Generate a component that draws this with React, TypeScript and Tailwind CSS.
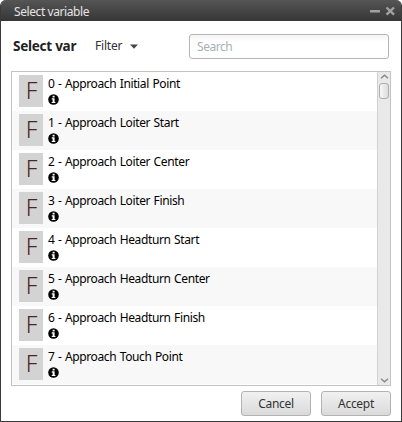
import type { ReactNode } from "react";

const variables = [
  "0 - Approach Initial Point",
  "1 - Approach Loiter Start",
  "2 - Approach Loiter Center",
  "3 - Approach Loiter Finish",
  "4 - Approach Headturn Start",
  "5 - Approach Headturn Center",
  "6 - Approach Headturn Finish",
  "7 - Approach Touch Point",
];

const InfoIcon = () => (
  <svg width="11" height="11" viewBox="0 0 11 11" className="block">
    <circle cx="5.5" cy="5.5" r="5.3" fill="#000" />
    <path d="M4.6 1.8h2v1.6h-2zM3.7 4.3h2.9v3.6h.8v1.2H3.7V7.9h.9V5.5h-.9z" fill="#fff" />
  </svg>
);

const TitleBar = () => (
  <div className="flex h-[21px] shrink-0 items-center justify-between rounded-t-[5px] bg-linear-to-b from-[#555555] to-[#363636] pl-[13px] pr-[6px]">
    <span className="pt-[3px] text-[12px] leading-[20px] tracking-[-0.42px] text-[#e4e4e4]">Select variable</span>
    <svg width="26" height="10" viewBox="0 0 26 10" className="mt-px block">
      <rect x="1" y="4" width="10" height="2.6" rx=".6" fill="#a2a2a2" />
      <path d="M17.5 1.5 25 8.7M25 1.5 17.5 8.7" stroke="#a2a2a2" strokeWidth="2.4" />
    </svg>
  </div>
);

const VariableRow = ({ label }: { label: string }) => (
  <div className="flex h-[39px] gap-[5px] pl-[7px] pt-[3px] even:bg-[#f8f8f8]">
    <div className="flex h-8 w-6 items-center justify-center bg-[#d3d3d3]">
      <span className="pl-px text-[23px] leading-[30px] font-light text-[#4b2424] pb-[2px]">F</span>
    </div>
    <div>
      <p className="h-[19px] text-[12px] leading-[18px] tracking-[-0.37px] [word-spacing:0.7px] whitespace-nowrap text-black">{label}</p>
      <InfoIcon />
    </div>
  </div>
);

const ScrollBar = () => (
  <div className="flex w-[13px] flex-col items-center border-l border-[#d2d2d2] bg-[#e9e9e9] pt-[2px] pb-[2px]">
    <svg width="9" height="5" viewBox="0 0 9 5" className="block">
      <path d="M1 4.2 4.5 1.2 8 4.2" fill="none" stroke="#858585" strokeWidth="1.3" />
    </svg>
    <div className="mt-[4px] h-4 w-[10px] rounded-[3px] border border-[#adadad] bg-linear-to-r from-[#f7f7f7] to-[#dcdcdc]" />
    <svg width="9" height="5" viewBox="0 0 9 5" className="mt-auto block">
      <path d="M1 .8 4.5 3.8 8 .8" fill="none" stroke="#858585" strokeWidth="1.3" />
    </svg>
  </div>
);

const Button = ({ children }: { children: ReactNode }) => (
  <button className="h-[25px] w-[70px] rounded-[3px] border border-[#b2b2b2] bg-linear-to-b from-[#f1f1f1] to-[#dadada] text-[12px] leading-[23px] tracking-[-0.3px] text-[#333333]">
    {children}
  </button>
);

const App = () => {
  return (
    <div className="h-[422px] w-[402px] bg-white font-['Noto_Sans','Open_Sans',sans-serif]">
      <div className="flex h-full flex-col rounded-t-[6px] border border-t-0 border-[#3b3b3b] bg-white">
        <TitleBar />
        <div className="flex h-[50px] shrink-0 items-center pl-3 pr-3">
          <span className="w-[82px] text-[13.5px] font-bold tracking-[-0.25px] whitespace-nowrap text-[#222222]">Select var</span>
          <span className="w-[35px] text-[12px] tracking-[-0.2px] text-[#333333]">Filter</span>
          <svg width="8" height="5" viewBox="0 0 8 5" className="block">
            <path d="M0 .5h8L4 4.8z" fill="#444" />
          </svg>
          <input
            placeholder="Search"
            className="ml-auto h-[25px] w-[200px] rounded-[3px] border border-[#b5b5b5] bg-linear-to-b from-[#f4f4f4] to-white to-30% px-[7px] text-[12px] tracking-[-0.45px] outline-none placeholder:text-[#a5b2b2]"
          />
        </div>
        <div className="mx-2.5 flex h-[315px] w-[380px] shrink-0 border border-[#c3c3c3]">
          <div className="flex-1">
            {variables.map((label) => (
              <VariableRow key={label} label={label} />
            ))}
          </div>
          <ScrollBar />
        </div>
        <div className="flex justify-end gap-2.5 pt-[5px] pr-2.5">
          <Button>Cancel</Button>
          <Button>Accept</Button>
        </div>
      </div>
    </div>
  );
};

export default App;
